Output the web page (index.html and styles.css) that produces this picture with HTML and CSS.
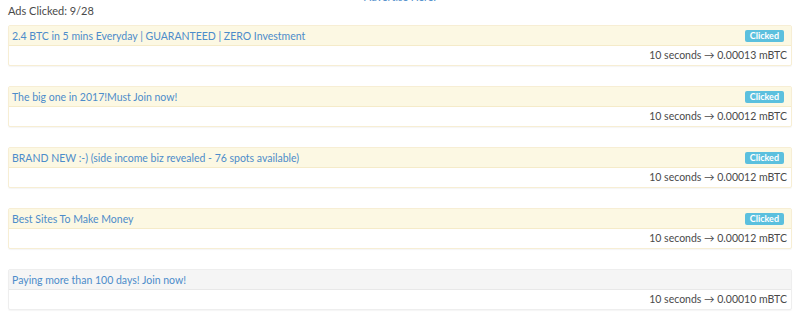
FILE: index.html
```html
<!DOCTYPE html>
<html lang="en">
<head>
  <meta charset="UTF-8" />
  <title>View Ads</title>
  <link rel="stylesheet" href="styles.css">
</head>
<body>

  <div class="top-link"><a href="#">Advertise Here!</a></div>
  <div class="ads-count">Ads Clicked: 9/28</div>

  <div class="ad-panel clicked">
    <div class="ad-heading">
      <a href="#">2.4 BTC in 5 mins Everyday | GUARANTEED | ZERO Investment</a>
      <span class="label">Clicked</span>
    </div>
    <div class="ad-body">10 seconds &rarr; 0.00013 mBTC</div>
  </div>

  <div class="ad-panel clicked">
    <div class="ad-heading">
      <a href="#">The big one in 2017!Must Join now!</a>
      <span class="label">Clicked</span>
    </div>
    <div class="ad-body">10 seconds &rarr; 0.00012 mBTC</div>
  </div>

  <div class="ad-panel clicked">
    <div class="ad-heading">
      <a href="#">BRAND NEW :-) (side income biz revealed - 76 spots available)</a>
      <span class="label">Clicked</span>
    </div>
    <div class="ad-body">10 seconds &rarr; 0.00012 mBTC</div>
  </div>

  <div class="ad-panel clicked">
    <div class="ad-heading">
      <a href="#">Best Sites To Make Money</a>
      <span class="label">Clicked</span>
    </div>
    <div class="ad-body">10 seconds &rarr; 0.00012 mBTC</div>
  </div>

  <div class="ad-panel">
    <div class="ad-heading">
      <a href="#">Paying more than 100 days! Join now!</a>
    </div>
    <div class="ad-body">10 seconds &rarr; 0.00010 mBTC</div>
  </div>

</body>
</html>
```

FILE: styles.css
```css
* {
  margin: 0;
  padding: 0;
  box-sizing: border-box;
}

body {
  font-family: Lato, 'Open Sans', sans-serif;
  font-size: 10.5px;
  color: #4a4a4a;
  background: #fff;
  padding: 0 8px;
}

a {
  color: #4c8cca;
  text-decoration: none;
}

.top-link {
  height: 4px;
  overflow: hidden;
  text-align: center;
}

.top-link a {
  display: block;
  margin-top: -10px;
  line-height: 14px;
}

.ads-count {
  height: 21px;
  line-height: 14px;
  font-size: 11px;
}

.ad-panel {
  border: 1px solid #eeeeee;
  border-radius: 2px;
  margin-bottom: 20px;
  box-shadow: 0 1px 1px rgba(0, 0, 0, 0.04);
}

.ad-heading {
  display: flex;
  justify-content: space-between;
  align-items: center;
  height: 20px;
  padding: 0 4px 0 3px;
  background: #f5f5f5;
  border-bottom: 1px solid #e8e8e8;
}

.ad-panel.clicked {
  border-color: #f7eed4;
}

.ad-panel.clicked .ad-heading {
  background: #fcf8e3;
  border-bottom-color: #f5ebc9;
}

.label {
  background: #5bc0de;
  color: #fff;
  font-size: 9px;
  font-weight: bold;
  padding: 1px 5px;
  border-radius: 2px;
  line-height: 10px;
  margin-right: 3px;
}

.ad-body {
  height: 19px;
  line-height: 19px;
  text-align: right;
  padding: 0 4px;
  font-size: 10.5px;
}
```
